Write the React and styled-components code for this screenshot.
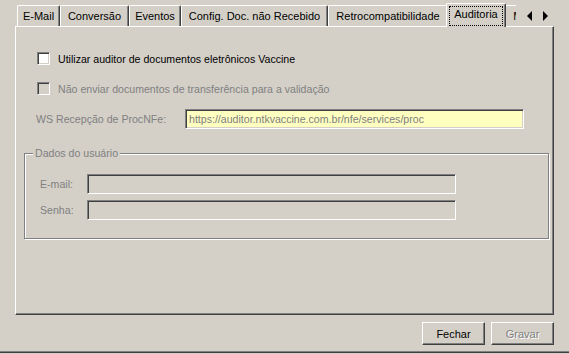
import React from 'react';
import styled, { createGlobalStyle } from 'styled-components';

const FACE = '#d4d0c8';
const SHADOW = '#808080';
const DARK = '#404040';
const LIGHT = '#ffffff';
const DISABLED = '#808080';

const GlobalStyle = createGlobalStyle`
  html, body {
    margin: 0;
    padding: 0;
    background: ${FACE};
  }
  * {
    box-sizing: border-box;
  }
`;

const Window = styled.div`
  width: 569px;
  height: 353px;
  background: ${FACE};
  border-bottom: 1px solid ${DARK};
  box-shadow: inset 0 -1px 0 ${SHADOW};
  font-family: "Liberation Sans", Tahoma, Arial, sans-serif;
  font-size: 10.6px;
  color: #000;
  display: flex;
  flex-direction: column;
`;

const TabStrip = styled.div`
  display: flex;
  align-items: flex-end;
  height: 27px;
  padding-left: 17px;
  position: relative;
  z-index: 1;
`;

const TabViewport = styled.div`
  display: flex;
  align-items: flex-end;
  width: 501px;
  height: 27px;
  overflow: hidden;
  padding-left: 2px;
  margin-left: -2px;
`;

const Tab = styled.div`
  flex: 0 0 auto;
  width: ${({ w }) => w}px;
  height: ${({ active }) => (active ? 24 : 21)}px;
  margin: ${({ active }) => (active ? '0 -1px 0 -2px' : '0 0 1px 0')};
  padding-top: ${({ active }) => (active ? 2 : 3)}px;
  background: ${FACE};
  border-top: 1px solid ${LIGHT};
  border-left: 1px solid ${LIGHT};
  border-right: 1px solid ${DARK};
  border-radius: 2px 2px 0 0;
  box-shadow: inset -1px 0 0 ${SHADOW};
  font-size: 11px;
  text-align: center;
  white-space: nowrap;
  line-height: 14px;
  position: relative;
  z-index: ${({ active }) => (active ? 2 : 0)};
`;

const FocusText = styled.span`
  display: block;
  margin: 0 2px;
  height: 20px;
  padding-top: 1px;
  outline: 1px dotted #000;
  outline-offset: -1px;
`;

const Arrows = styled.div`
  display: flex;
  align-items: center;
  gap: 11px;
  height: 21px;
  margin-bottom: 1px;
  padding-left: 11px;
`;

const Arrow = styled.span`
  width: 0;
  height: 0;
  border-top: 5px solid transparent;
  border-bottom: 5px solid transparent;
  ${({ dir }) =>
    dir === 'left'
      ? 'border-right: 5px solid #000;'
      : 'border-left: 5px solid #000;'}
`;

const Page = styled.div`
  margin: -1px 15px 0 15px;
  height: 289px;
  background: ${FACE};
  border-top: 1px solid ${LIGHT};
  border-left: 1px solid ${LIGHT};
  border-right: 1px solid ${DARK};
  border-bottom: 1px solid ${DARK};
  box-shadow: inset -1px -1px 0 ${SHADOW};
  display: flex;
  flex-direction: column;
`;

const CheckRow = styled.label`
  display: flex;
  align-items: center;
  height: 13px;
  margin: ${({ top }) => top}px 0 0 21px;
  color: ${({ disabled }) => (disabled ? DISABLED : '#000')};
  white-space: nowrap;
`;

const Box = styled.span`
  width: 13px;
  height: 13px;
  margin-right: 8px;
  background: ${({ disabled }) => (disabled ? FACE : LIGHT)};
  border-top: 1px solid ${SHADOW};
  border-left: 1px solid ${SHADOW};
  border-right: 1px solid ${LIGHT};
  border-bottom: 1px solid ${LIGHT};
  box-shadow: inset 1px 1px 0 ${DARK}, inset -1px -1px 0 ${FACE};
`;

const FieldRow = styled.div`
  display: flex;
  align-items: center;
  height: 20px;
  margin: ${({ top }) => top}px 0 0 ${({ left }) => left}px;
`;

const Label = styled.span`
  width: ${({ w }) => w}px;
  color: ${DISABLED};
  white-space: nowrap;
`;

const Input = styled.div`
  width: ${({ w }) => w}px;
  height: 20px;
  padding: 2px 0 0 3px;
  line-height: 14px;
  background: ${({ bg }) => bg || FACE};
  color: ${DISABLED};
  border-top: 1px solid ${SHADOW};
  border-left: 1px solid ${SHADOW};
  border-right: 1px solid ${LIGHT};
  border-bottom: 1px solid ${LIGHT};
  box-shadow: inset 1px 1px 0 ${DARK}, inset -1px -1px 0 ${FACE};
  white-space: nowrap;
  overflow: hidden;
`;

const Group = styled.div`
  position: relative;
  width: 525px;
  height: 86px;
  margin: 24px 0 0 8px;
  padding-top: 20px;
  border: 1px solid ${SHADOW};
  box-shadow: inset 1px 1px 0 ${LIGHT}, 1px 1px 0 ${LIGHT};
`;

const Legend = styled.span`
  position: absolute;
  top: -8px;
  left: 8px;
  padding: 0 2px;
  background: ${FACE};
  color: ${DISABLED};
  line-height: 14px;
`;

const Footer = styled.div`
  display: flex;
  justify-content: flex-end;
  gap: 6px;
  margin: 7px 15px 0 0;
`;

const Button = styled.div`
  width: 63px;
  height: 23px;
  display: flex;
  align-items: center;
  justify-content: center;
  font-size: 11px;
  background: ${FACE};
  color: ${({ disabled }) => (disabled ? DISABLED : '#000')};
  text-shadow: ${({ disabled }) => (disabled ? `1px 1px 0 ${LIGHT}` : 'none')};
  border-top: 1px solid ${LIGHT};
  border-left: 1px solid ${LIGHT};
  border-right: 1px solid ${DARK};
  border-bottom: 1px solid ${DARK};
  box-shadow: inset -1px -1px 0 ${SHADOW};
`;

const tabs = [
  { label: 'E-Mail', w: 43 },
  { label: 'Conversão', w: 69 },
  { label: 'Eventos', w: 52 },
  { label: 'Config. Doc. não Recebido', w: 147 },
  { label: 'Retrocompatibilidade', w: 120 },
  { label: 'Auditoria', w: 60, active: true },
  { label: 'Monitoramento', w: 90 },
];

const App = () => (
  <>
    <GlobalStyle />
    <Window>
      <TabStrip>
        <TabViewport>
          {tabs.map((t) => (
            <Tab key={t.label} w={t.w} active={t.active}>
              {t.active ? <FocusText>{t.label}</FocusText> : t.label}
            </Tab>
          ))}
        </TabViewport>
        <Arrows>
          <Arrow dir="left" />
          <Arrow dir="right" />
        </Arrows>
      </TabStrip>
      <Page>
        <CheckRow top={25}>
          <Box />
          Utilizar auditor de documentos eletrônicos Vaccine
        </CheckRow>
        <CheckRow top={17} disabled>
          <Box disabled />
          Não enviar documentos de transferência para a validação
        </CheckRow>
        <FieldRow top={14} left={20}>
          <Label w={149}>WS Recepção de ProcNFe:</Label>
          <Input w={339} bg="#ffffc0">
            https://auditor.ntkvaccine.com.br/nfe/services/proc
          </Input>
        </FieldRow>
        <Group>
          <Legend>Dados do usuário</Legend>
          <FieldRow top={0} left={15}>
            <Label w={47}>E-mail:</Label>
            <Input w={369} />
          </FieldRow>
          <FieldRow top={6} left={15}>
            <Label w={47}>Senha:</Label>
            <Input w={369} />
          </FieldRow>
        </Group>
      </Page>
      <Footer>
        <Button>Fechar</Button>
        <Button disabled>Gravar</Button>
      </Footer>
    </Window>
  </>
);

export default App;
